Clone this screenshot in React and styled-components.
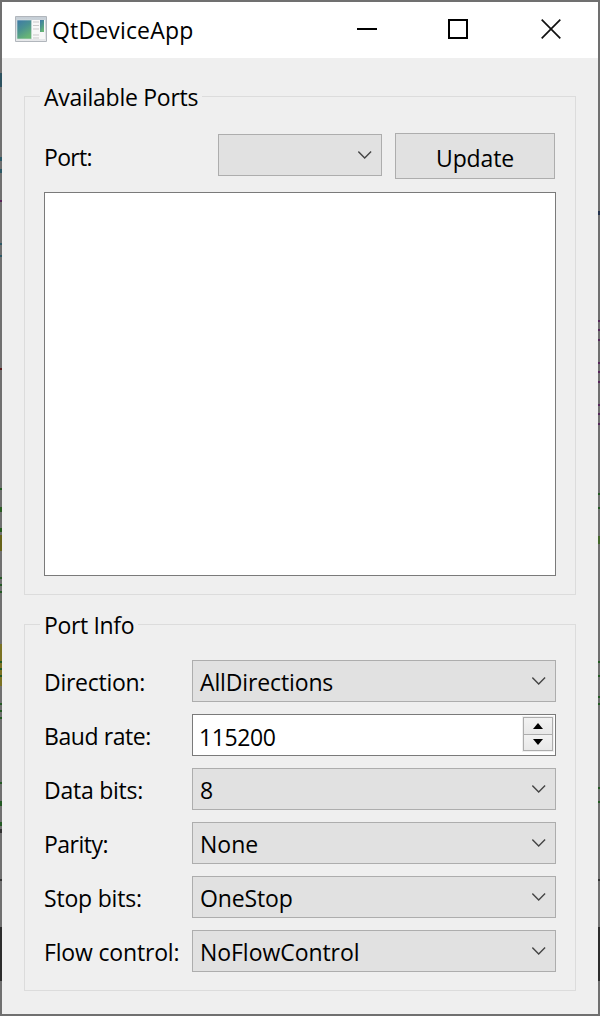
import React from 'react';
import styled, { createGlobalStyle } from 'styled-components';

const Global = createGlobalStyle`
  * { box-sizing: border-box; }
  body { margin: 0; background: #707070; }
`;

/* Horizontal slices of the desktop showing through the translucent frame: [top, height, colour] */
const leftMarks = [
  [73, 14, '#2d5260'], [157, 4, '#2d5966'], [169, 4, '#2d5966'], [200, 2, '#5a2459'],
  [243, 2, '#2d5966'], [255, 2, '#2d5966'], [368, 2, '#591d1d'], [488, 2, '#245a24'],
  [507, 5, '#2a5d22'], [528, 4, '#245a1c'], [535, 16, '#67631a'], [577, 2, '#245a24'],
  [584, 2, '#245a24'], [591, 2, '#245a24'], [661, 2, '#245a24'], [668, 2, '#245a24'],
  [675, 2, '#245a24'], [644, 42, '#7b7223'], [703, 2, '#245a24'], [710, 2, '#245a24'],
  [717, 2, '#245a24'], [782, 2, '#245a24'], [801, 5, '#245a24'], [822, 4, '#245a24'],
  [829, 4, '#333333'], [879, 2, '#333333'], [927, 54, '#2c2c2c'],
];
const rightMarks = [
  [211, 4, '#25344d'], [320, 2, '#56285a'], [329, 2, '#56285a'], [339, 2, '#56285a'],
  [362, 2, '#56285a'], [371, 2, '#56285a'], [381, 2, '#56285a'], [404, 2, '#56285a'],
  [413, 2, '#56285a'], [423, 2, '#56285a'], [493, 2, '#245a24'], [507, 2, '#245a24'],
  [536, 8, '#45682b'], [661, 2, '#245a24'], [675, 2, '#245a24'], [696, 2, '#245a24'],
  [703, 2, '#245a24'], [787, 2, '#245a24'], [801, 2, '#245a24'], [879, 2, '#333333'],
  [927, 54, '#2c2c2c'],
];
const stripes = (marks, side) =>
  marks
    .map(([y, h, c]) => `linear-gradient(${c}, ${c}) ${side} ${y}px / 2px ${h}px no-repeat`)
    .join(', ');

const Frame = styled.div`
  width: 600px;
  height: 1016px;
  padding: 2px;
  background: ${stripes(leftMarks, 'left')}, ${stripes(rightMarks, 'right')}, #707070;
  font-family: 'Open Sans', 'Noto Sans', sans-serif;
  font-size: 23px;
  line-height: 32px;
  color: #000;
`;

const Window = styled.main`
  display: flex;
  flex-direction: column;
  height: 100%;
  background: #efefef;
`;

const TitleBar = styled.header`
  display: flex;
  align-items: center;
  height: 56px;
  padding-left: 13px;
  background: #fff;

  > svg {
    margin-bottom: 2px;
  }
`;

const Label = styled.span`
  display: block;
  white-space: nowrap;
  letter-spacing: ${(p) => p.$track || 0}px;
`;

const Title = styled.h1`
  flex: 1;
  margin: 0 0 0 5px;
  font: inherit;
`;

const Controls = styled.div`
  display: flex;
  padding-right: 1px;
`;

const Control = styled.button`
  display: flex;
  align-items: center;
  justify-content: center;
  width: ${(p) => p.$width}px;
  height: 56px;
  padding: 0 0 2px;
  border: 0;
  background: none;
`;

const Body = styled.div`
  display: flex;
  flex-direction: column;
  gap: 13px;
  padding: 22px 22px 0;
`;

const Group = styled.fieldset`
  height: ${(p) => p.$height}px;
  margin: 0;
  padding: 0 19px;
  border: 1px solid #dcdcdc;
  min-width: 0;
`;

const Legend = styled.legend`
  height: 32px;
  margin-left: -4px;
  padding: 1px 4px 0;
`;

const PortRow = styled.div`
  display: flex;
  align-items: flex-start;
  height: 46px;
  margin: 21px 0 13px;
`;

const PortName = styled.div`
  width: 174px;
  padding-top: 8px;
`;

const Combo = styled.div`
  display: flex;
  align-items: center;
  justify-content: space-between;
  width: ${(p) => p.$width}px;
  height: 42px;
  margin-top: ${(p) => p.$drop || 0}px;
  padding: 1px 9px 0 7px;
  border: 1px solid #adadad;
  background: #e1e1e1;

  svg {
    margin-bottom: 1px;
  }
`;

const PushButton = styled.button`
  display: flex;
  align-items: center;
  justify-content: center;
  width: 160px;
  height: 46px;
  margin-left: 13px;
  padding: 3px 0 0;
  border: 1px solid #adadad;
  background: #e1e1e1;
  color: inherit;
  font: inherit;
`;

const PortList = styled.div`
  height: 384px;
  border: 1px solid #7a7a7a;
  background: #fff;
`;

const Form = styled.div`
  display: grid;
  grid-template-columns: 148px 364px;
  grid-auto-rows: 42px;
  row-gap: 12px;
  padding-top: 20px;
`;

const FieldName = styled.label`
  display: flex;
  align-items: center;
  padding-top: 1px;
`;

const SpinBox = styled.div`
  display: flex;
  justify-content: space-between;
  height: 42px;
  padding: 1px 1px 1px 6px;
  border: 1px solid #7a7a7a;
  background: #fff;
`;

const SpinValue = styled.div`
  padding-top: 5px;
`;

const Stepper = styled.div`
  display: flex;
  flex-direction: column;
  width: 32px;
  height: 36px;
  padding: 1px;
  background: #efefef;
`;

const Step = styled.button`
  display: grid;
  place-items: center;
  width: 30px;
  height: 18px;
  padding: 0;
  border: 1px solid #adadad;
  background: linear-gradient(#f2f2f2, #e8e8e8);

  & + & {
    height: 17px;
    border-top: 0;
  }
`;

const Chevron = () => (
  <svg width="14" height="8" viewBox="0 0 14 8" fill="none" stroke="#444" strokeWidth="1.4">
    <path d="M.3.6 6.700 7 13.100.6" />
  </svg>
);

const AppIcon = () => (
  <svg width="32" height="26" viewBox="0 0 32 26">
    <defs>
      <linearGradient id="pane" x1="0" y1="0" x2=".5" y2="1">
        <stop offset="0" stopColor="#3d78a8" />
        <stop offset=".5" stopColor="#4a9291" />
        <stop offset="1" stopColor="#68b576" />
      </linearGradient>
      <linearGradient id="shell" x1="0" y1="0" x2="0" y2="1">
        <stop offset="0" stopColor="#c5ced6" />
        <stop offset="1" stopColor="#e8e9eb" />
      </linearGradient>
    </defs>
    <path d="M.5.5h31v25H.5z" fill="url(#shell)" stroke="#b1b6bc" />
    <path d="M2 4h14.500v19H2z" fill="url(#pane)" stroke="#d9e4e4" strokeWidth=".6" />
    <path d="M17 4h13v19H17z" fill="#f8f8f8" />
    <path d="M25 4h4v12h-4z" fill="url(#pane)" />
    <path d="M18 6h6M18 9.500h6M18 13h6M18 19h6M18 22h6" stroke="#c9c9c9" />
  </svg>
);

const settings = [
  { name: 'Direction:', nameTrack: -0.27, value: 'AllDirections', track: -0.13 },
  { name: 'Baud rate:', nameTrack: -0.42, value: '115200', track: -0.4, spin: true },
  { name: 'Data bits:', nameTrack: -0.25, value: '8' },
  { name: 'Parity:', nameTrack: -0.5, value: 'None' },
  { name: 'Stop bits:', nameTrack: -0.2, value: 'OneStop', track: -0.15 },
  { name: 'Flow control:', nameTrack: -0.17, value: 'NoFlowControl', track: -0.05 },
];

export default function App() {
  return (
    <>
      <Global />
      <Frame>
        <Window>
          <TitleBar>
            <AppIcon />
            <Title><Label $track={0.16}>QtDeviceApp</Label></Title>
            <Controls>
              <Control aria-label="Minimize" $width={90}>
                <svg width="20" height="20"><path d="M0 10h20" stroke="#000" strokeWidth="2" /></svg>
              </Control>
              <Control aria-label="Maximize" $width={92}>
                <svg width="20" height="20"><path d="M1 1h18v18H1z" fill="none" stroke="#000" strokeWidth="2" /></svg>
              </Control>
              <Control aria-label="Close" $width={93}>
                <svg width="20" height="20"><path d="M.7.700 19.300 19.300M19.300.7.700 19.300" stroke="#111" strokeWidth="1.700" /></svg>
              </Control>
            </Controls>
          </TitleBar>
          <Body>
            <Group $height={515}>
              <Legend><Label $track={-0.27}>Available Ports</Label></Legend>
              <PortRow>
                <PortName><Label $track={-0.7}>Port:</Label></PortName>
                <Combo $width={164} $drop={1}><span /><Chevron /></Combo>
                <PushButton><Label $track={-0.15}>Update</Label></PushButton>
              </PortRow>
              <PortList />
            </Group>
            <Group $height={383}>
              <Legend><Label $track={-0.35}>Port Info</Label></Legend>
              <Form>
                {settings.map((s) => (
                  <React.Fragment key={s.name}>
                    <FieldName><Label $track={s.nameTrack}>{s.name}</Label></FieldName>
                    {s.spin ? (
                      <SpinBox>
                        <SpinValue><Label $track={s.track}>{s.value}</Label></SpinValue>
                        <Stepper>
                          <Step aria-label="Increase">
                            <svg width="10" height="6"><path d="M0 6 5 0l5 6z" /></svg>
                          </Step>
                          <Step aria-label="Decrease">
                            <svg width="10" height="6"><path d="M0 0l5 6 5-6z" /></svg>
                          </Step>
                        </Stepper>
                      </SpinBox>
                    ) : (
                      <Combo $width={364}><Label $track={s.track}>{s.value}</Label><Chevron /></Combo>
                    )}
                  </React.Fragment>
                ))}
              </Form>
            </Group>
          </Body>
        </Window>
      </Frame>
    </>
  );
}
